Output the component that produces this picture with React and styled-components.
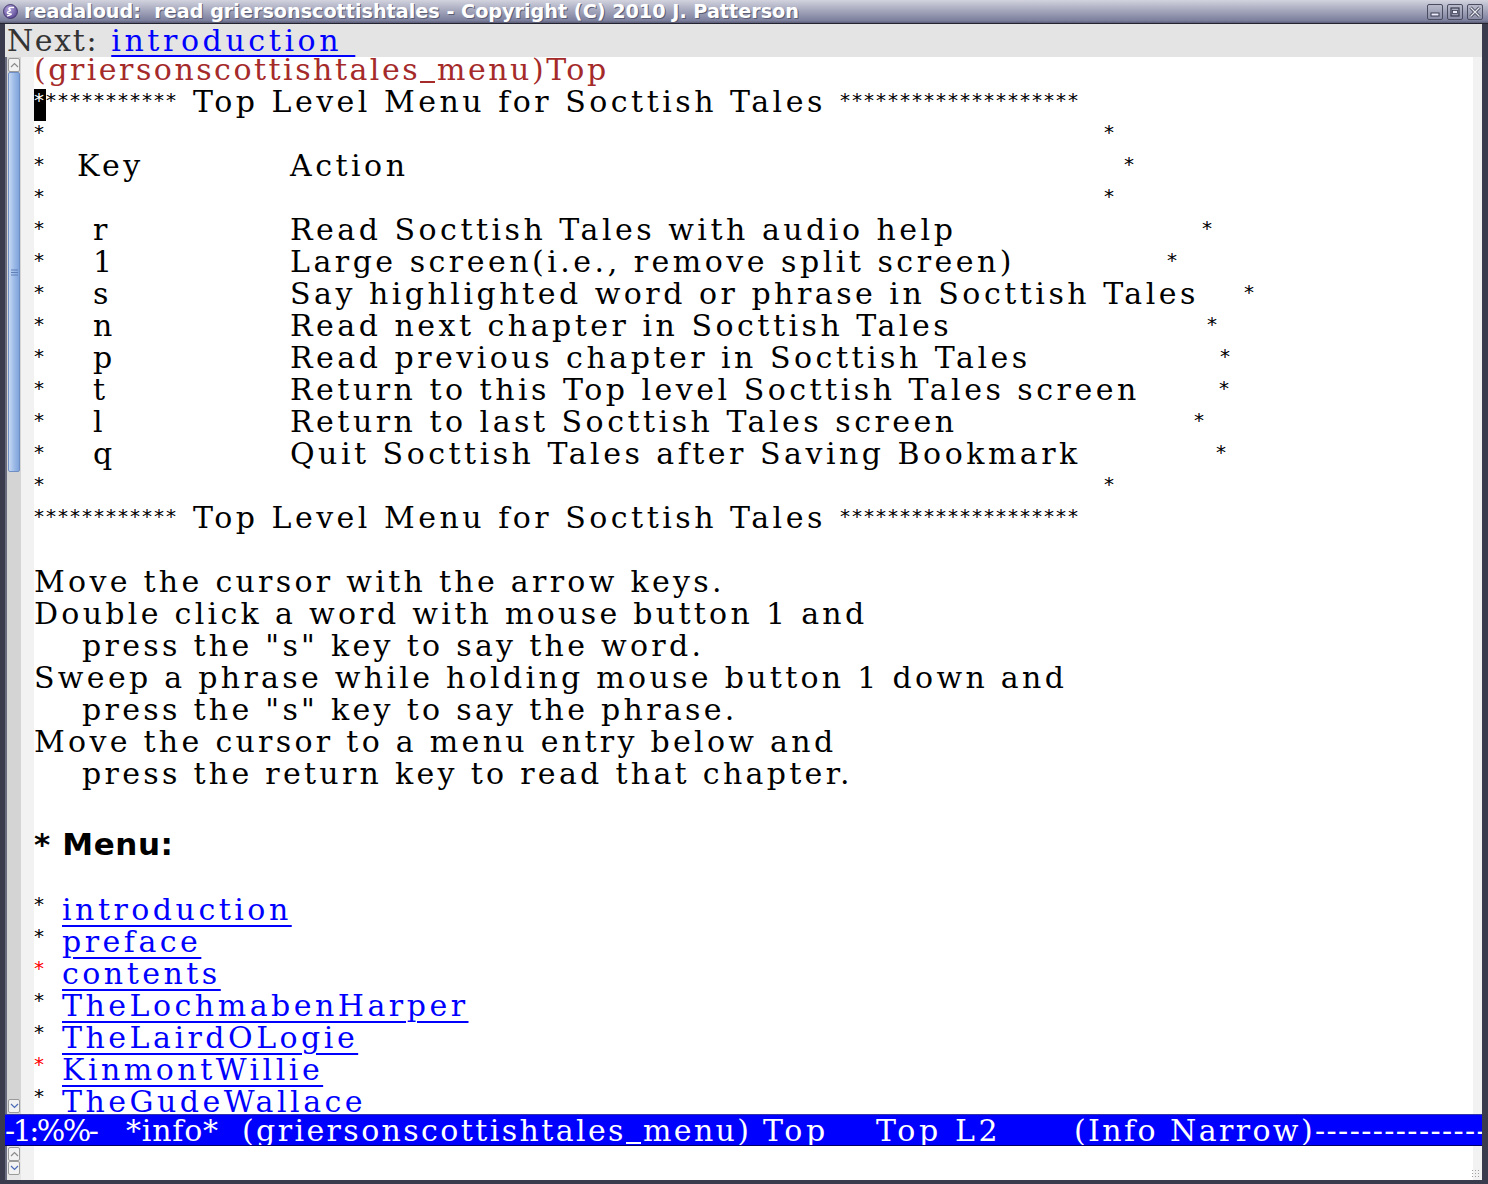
import React from "react";
import styled, { createGlobalStyle } from "styled-components";

const Global = createGlobalStyle`
  html, body { margin: 0; padding: 0; background: #1c1d28; }
  body { width: 1488px; height: 1184px; overflow: hidden; }
`;

const SERIF = `"DejaVu Serif", "Liberation Serif", serif`;
const SANS = `"DejaVu Sans", "Liberation Sans", sans-serif`;

const Window = styled.div`
  width: 1488px;
  height: 1184px;
  display: flex;
  flex-direction: column;
  background: #3a3c4e;
  box-sizing: border-box;
`;

const TitleBar = styled.div`
  height: 24px;
  flex: none;
  display: flex;
  align-items: center;
  padding: 0 5px 0 3px;
  background: linear-gradient(#d2d3de 0%, #a5a7bd 45%, #7c7f9c 90%, #5a5c74 100%);
  border-bottom: 1px solid #23242f;
  box-sizing: border-box;
`;

const TitleText = styled.div`
  flex: 1;
  margin-left: 6px;
  font-family: ${SANS};
  font-weight: bold;
  font-size: 19.2px;
  color: #ffffff;
  white-space: pre;
  text-shadow: 1px 1px 0 #5b5d74;
`;

const TitleButtons = styled.div`
  display: flex;
  gap: 4px;
`;

const TitleButton = styled.div`
  width: 16px;
  height: 16px;
  box-sizing: border-box;
  border: 1px solid #4a4c60;
  border-radius: 2px;
  background: linear-gradient(#b9bbcc, #8a8da6);
  display: flex;
  align-items: center;
  justify-content: center;
`;

const Frame = styled.div`
  flex: 1;
  display: flex;
  flex-direction: column;
  margin: 0 6px 4px 5px;
  background: #ffffff;
  min-height: 0;
`;

const HeaderLine = styled.div`
  height: 33px;
  flex: none;
  background: #e4e4e4;
  display: flex;
  align-items: center;
  padding-left: 2px;
  font-family: ${SERIF};
  font-size: 30px;
  letter-spacing: 3.6px;
  white-space: pre;
  color: #333333;
  position: relative;
  z-index: 1;
`;

const HeaderLabel = styled.span`
  letter-spacing: 1.6px;
  margin-right: 2px;
`;

const Link = styled.span`
  color: #0000ff;
  text-decoration: underline;
  text-decoration-thickness: 2px;
  text-underline-offset: 5px;
`;

const HeaderLink = styled(Link)`
  text-underline-offset: 4px;
`;

const MenuLink = styled(Link)`
  margin-top: 5px;
`;

const Underscore = styled.span`
  display: inline-block;
  width: 15px;
  height: 2px;
  margin-right: 2px;
  background: currentColor;
  vertical-align: -3px;
`;

const Body = styled.div`
  flex: 1;
  display: flex;
  min-height: 0;
`;

const ScrollBar = styled.div`
  width: 16px;
  flex: none;
  background: #d4d4d4;
  display: flex;
  flex-direction: column;
  padding: 1px;
  box-sizing: border-box;
  border-left: 2px solid #6a6c80;
`;

const ArrowBtn = styled.div`
  height: 14px;
  flex: none;
  box-sizing: border-box;
  border: 1px solid #9a9a9a;
  border-radius: 2px;
  background: #f2f2f2;
  display: flex;
  align-items: center;
  justify-content: center;
`;

const Thumb = styled.div`
  height: ${(p) => p.$h}px;
  flex: none;
  box-sizing: border-box;
  border: 1px solid #6f8fc4;
  border-radius: 2px;
  background: linear-gradient(90deg, #c6d8f2, #9dbbe8 50%, #7ea3db);
  display: flex;
  align-items: center;
  justify-content: center;
`;

const Track = styled.div`
  flex: 1;
`;

const Fringe = styled.div`
  width: ${(p) => p.$w}px;
  flex: none;
  background: #f2f2f2;
  position: relative;
`;

const Buffer = styled.div`
  flex: 1;
  font-family: ${SERIF};
  font-size: 30px;
  letter-spacing: 3.5px;
  color: #000000;
`;

const Line = styled.div`
  height: 32px;
  box-sizing: border-box;
  padding-bottom: 6px;
  line-height: 26px;
  white-space: pre;
  display: flex;
  align-items: center;
  padding-left: ${(p) => p.$indent || 0}px;
  letter-spacing: ${(p) => (p.$help ? "3.3px" : "inherit")};
`;

const Stars = styled.span`
  font-family: ${SANS};
  font-size: 20px;
  letter-spacing: 2px;
  color: ${(p) => p.$color || "#000000"};
  align-self: flex-start;
  line-height: 23px;
`;

const Cursor = styled.span`
  display: inline-block;
  width: 12px;
  height: 32px;
  background: #000000;
  color: #ffffff;
  font-family: ${SANS};
  font-size: 20px;
  line-height: 23px;
  align-self: flex-start;
  letter-spacing: 0;
`;

const Title = styled.span`
  margin: 0 14px 0 15px;
`;

const NodeName = styled.span`
  color: #a52a2a;
  letter-spacing: 2.5px;
`;

const TableRow = styled.div`
  height: 32px;
  line-height: 26px;
  white-space: pre;
  display: grid;
  grid-template-columns: 43px 213px auto 1fr auto;
  align-items: start;
  width: ${(p) => p.$end}px;
`;

const KeyCell = styled.span`
  padding-left: ${(p) => (p.$head ? 0 : 16)}px;
`;

const Gap = styled.span``;

const MenuHead = styled.div`
  height: 32px;
  display: flex;
  align-items: center;
  font-family: ${SANS};
  font-weight: bold;
  font-size: 31px;
  letter-spacing: 0.6px;
  white-space: pre;
  padding-top: 6px;
  box-sizing: border-box;
`;

const MenuItem = styled.div`
  height: 32px;
  line-height: 32px;
  display: flex;
  align-items: flex-start;
  white-space: pre;
`;

const MenuStar = styled(Stars)`
  width: 28px;
  flex: none;
  line-height: 30px;
`;

const ModeLine = styled.div`
  height: 32px;
  flex: none;
  background: #0000ff;
  border-top: 1px solid #3333aa;
  border-bottom: 1px solid #000066;
  box-sizing: border-box;
  color: #ffffff;
  font-family: ${SERIF};
  font-size: 30px;
  letter-spacing: 3.6px;
  display: flex;
  align-items: center;
  white-space: pre;
  overflow: hidden;
  position: relative;
  z-index: 1;
`;

const ModeSeg = styled.span`
  width: ${(p) => (p.$w ? `${p.$w}px` : "auto")};
  flex: none;
  letter-spacing: ${(p) => p.$ls}px;
`;

const Dashes = styled.span`
  flex: 1;
  overflow: hidden;
  letter-spacing: 1.4px;
`;

const MiniBuffer = styled.div`
  height: 34px;
  flex: none;
  display: flex;
`;

const MiniScroll = styled(ScrollBar)`
  background: #e6e6e6;
`;

const Grip = styled.div`
  position: absolute;
  right: 1px;
  bottom: 1px;
  width: 10px;
  height: 10px;
  background-image: radial-gradient(#a0a0a0 30%, transparent 35%);
  background-size: 3px 3px;
`;

const Chevron = ({ up }) => (
  <svg width="9" height="6" viewBox="0 0 9 6">
    <path
      d={up ? "M1 5 L4.5 1.5 L8 5" : "M1 1 L4.5 4.5 L8 1"}
      fill="none"
      stroke={up ? "#8a8a8a" : "#4a6ab8"}
      strokeWidth="1.2"
    />
  </svg>
);

const EmacsIcon = () => (
  <svg width="15" height="15" viewBox="0 0 15 15">
    <defs>
      <radialGradient id="eg" cx="0.4" cy="0.35" r="0.7">
        <stop offset="0" stopColor="#b7a9e0" />
        <stop offset="1" stopColor="#56428f" />
      </radialGradient>
    </defs>
    <circle cx="7.5" cy="7.5" r="7" fill="url(#eg)" stroke="#3b2f66" strokeWidth="0.8" />
    <path
      d="M10.5 3.5 C7 3 4.5 4.2 6.8 5.6 C9 7 4 7.5 4.3 8.8 C4.6 10 9.2 9.4 8 10.6 C7.3 11.3 5 11.6 4.5 11.8"
      fill="none"
      stroke="#ffffff"
      strokeWidth="1.4"
      strokeLinecap="round"
    />
  </svg>
);

const tableRows = [
  { key: "r", action: "Read Socttish Tales with audio help", end: 1208 },
  { key: "1", action: "Large screen(i.e., remove split screen)", end: 1173 },
  { key: "s", action: "Say highlighted word or phrase in Socttish Tales", end: 1250 },
  { key: "n", action: "Read next chapter in Socttish Tales", end: 1213 },
  { key: "p", action: "Read previous chapter in Socttish Tales", end: 1226 },
  { key: "t", action: "Return to this Top level Socttish Tales screen", end: 1225 },
  { key: "l", action: "Return to last Socttish Tales screen", end: 1200 },
  { key: "q", action: "Quit Socttish Tales after Saving Bookmark", end: 1222 },
];

const helpLines = [
  { text: "Move the cursor with the arrow keys.", indent: 0 },
  { text: "Double click a word with mouse button 1 and", indent: 0 },
  { text: "press the \"s\" key to say the word.", indent: 48 },
  { text: "Sweep a phrase while holding mouse button 1 down and", indent: 0 },
  { text: "press the \"s\" key to say the phrase.", indent: 48 },
  { text: "Move the cursor to a menu entry below and", indent: 0 },
  { text: "press the return key to read that chapter.", indent: 48 },
];

const menu = [
  { name: "introduction", red: false },
  { name: "preface", red: false },
  { name: "contents", red: true },
  { name: "TheLochmabenHarper", red: false },
  { name: "TheLairdOLogie", red: false },
  { name: "KinmontWillie", red: true },
  { name: "TheGudeWallace", red: false },
];

const BX = 34; // x where buffer text starts

const StarRow = ({ end, children }) => (
  <TableRow $end={end + 6 - BX}>
    <Stars>*</Stars>
    {children}
    <Gap />
    <Stars>*</Stars>
  </TableRow>
);

const MenuNode = () => (
  <>
    (griersonscottishtales<Underscore />menu)
  </>
);

export default function App() {
  return (
    <Window>
      <Global />
      <TitleBar>
        <EmacsIcon />
        <TitleText>readaloud:  read griersonscottishtales - Copyright (C) 2010 J. Patterson</TitleText>
        <TitleButtons>
          <TitleButton>
            <svg width="10" height="10" viewBox="0 0 10 10">
              <rect x="1" y="6" width="8" height="3" fill="#eef" stroke="#3a3c50" strokeWidth="1" />
            </svg>
          </TitleButton>
          <TitleButton>
            <svg width="10" height="10" viewBox="0 0 10 10">
              <rect x="1" y="1" width="8" height="8" fill="none" stroke="#3a3c50" strokeWidth="1.2" />
              <rect x="2.5" y="3.5" width="5" height="3" fill="#eef" stroke="#3a3c50" strokeWidth="0.8" />
            </svg>
          </TitleButton>
          <TitleButton>
            <svg width="12" height="12" viewBox="0 0 12 12">
              <path d="M1.5 1.5 L10.5 10.5 M10.5 1.5 L1.5 10.5" stroke="#3a3c50" strokeWidth="3" />
              <path d="M1.5 1.5 L10.5 10.5 M10.5 1.5 L1.5 10.5" stroke="#e8e8f0" strokeWidth="1.4" />
            </svg>
          </TitleButton>
        </TitleButtons>
      </TitleBar>

      <Frame>
        <HeaderLine>
          <HeaderLabel>Next: </HeaderLabel>
          <HeaderLink>introduction </HeaderLink>
        </HeaderLine>

        <Body>
          <ScrollBar>
            <ArrowBtn>
              <Chevron up />
            </ArrowBtn>
            <Thumb $h={400}>
              <svg width="7" height="7" viewBox="0 0 7 7">
                <path d="M0 1 H7 M0 3.5 H7 M0 6 H7" stroke="#5f7fb8" strokeWidth="1" />
              </svg>
            </Thumb>
            <Track />
            <ArrowBtn>
              <Chevron />
            </ArrowBtn>
          </ScrollBar>
          <Fringe $w={13} />
          <Buffer>
            <Line>
              <NodeName>
                <MenuNode />
                Top
              </NodeName>
            </Line>
            <Line>
              <Cursor>*</Cursor>
              <Stars>***********</Stars>
              <Title>Top Level Menu for Socttish Tales</Title>
              <Stars>********************</Stars>
            </Line>
            <StarRow end={1110}>
              <span />
              <span />
            </StarRow>
            <TableRow $end={1130 + 6 - BX}>
              <Stars>*</Stars>
              <KeyCell $head>Key</KeyCell>
              <span>Action</span>
              <Gap />
              <Stars>*</Stars>
            </TableRow>
            <StarRow end={1110}>
              <span />
              <span />
            </StarRow>
            {tableRows.map((r) => (
              <StarRow key={r.key} end={r.end}>
                <KeyCell>{r.key}</KeyCell>
                <span>{r.action}</span>
              </StarRow>
            ))}
            <StarRow end={1110}>
              <span />
              <span />
            </StarRow>
            <Line>
              <Stars>************</Stars>
              <Title>Top Level Menu for Socttish Tales</Title>
              <Stars>********************</Stars>
            </Line>
            <Line />
            {helpLines.map((l, i) => (
              <Line key={i} $indent={l.indent} $help>
                {l.text}
              </Line>
            ))}
            <Line />
            <MenuHead>* Menu:</MenuHead>
            <Line />
            {menu.map((m) => (
              <MenuItem key={m.name}>
                <MenuStar $color={m.red ? "#ff0000" : "#000000"}>*</MenuStar>
                <MenuLink>{m.name}</MenuLink>
              </MenuItem>
            ))}
          </Buffer>
          <Fringe $w={9} />
        </Body>

        <ModeLine>
          <ModeSeg $w={121} $ls={-2.5}>-1:%%-</ModeSeg>
          <ModeSeg $w={116} $ls={0.8}>*info*</ModeSeg>
          <ModeSeg $w={521} $ls={2.4}>
            <MenuNode />
          </ModeSeg>
          <ModeSeg $w={113} $ls={3.6}>Top</ModeSeg>
          <ModeSeg $w={198} $ls={3.6}>Top L2</ModeSeg>
          <ModeSeg $ls={2.4}>(Info Narrow)</ModeSeg>
          <Dashes>--------------------------------------------</Dashes>
        </ModeLine>

        <MiniBuffer>
          <MiniScroll>
            <ArrowBtn>
              <Chevron up />
            </ArrowBtn>
            <ArrowBtn>
              <Chevron />
            </ArrowBtn>
          </MiniScroll>
          <Fringe $w={13} />
          <Buffer />
          <Fringe $w={9}>
            <Grip />
          </Fringe>
        </MiniBuffer>
      </Frame>
    </Window>
  );
}
